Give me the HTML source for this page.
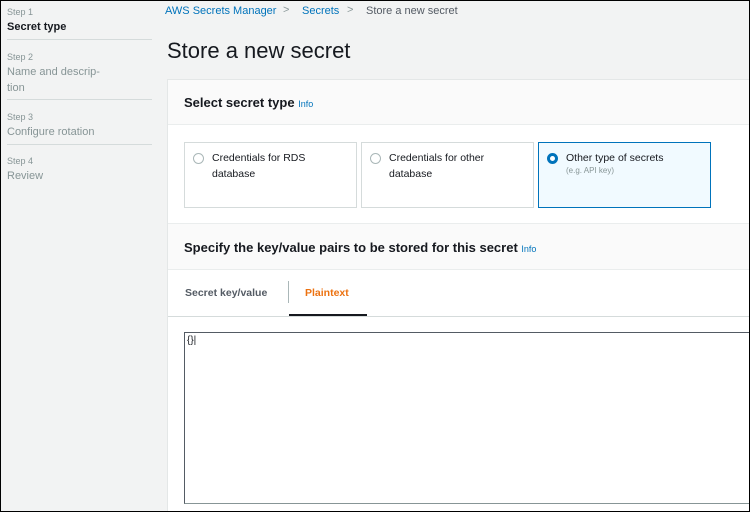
<!DOCTYPE html>
<html><head><style>
*{box-sizing:border-box;margin:0;padding:0}
body{width:750px;height:512px;overflow:hidden;font-family:"Liberation Sans",sans-serif;background:#f2f3f3;position:relative}
.frame{position:absolute;inset:0;border:1px solid #000;z-index:10;pointer-events:none}
.side{position:absolute;left:0;top:0;width:152px;height:512px;background:#f2f3f3}
.step{position:absolute;left:7px;font-size:9px;color:#879596}
.lbl{position:absolute;left:7px;font-size:11px;color:#879596;line-height:16px}
.hr{position:absolute;left:7px;width:145px;height:1px;background:#d5dbdb}
.a{position:absolute;font-size:11px;color:#0073bb}
.panel{position:absolute;left:167px;top:79px;width:583px;height:433px;background:#fff;border:1px solid #e4e7e7;border-right:none}
.h{position:absolute;left:0;width:583px;background:#fafafa;border-bottom:1px solid #eaeded}
.card{position:absolute;top:62px;height:66px;border:1px solid #d5dbdb;background:#fff;font-size:10.5px;color:#16191f;line-height:16px}
.rad{position:absolute;left:8px;top:10px;width:11px;height:11px;border-radius:50%;border:1px solid #aab7b8;background:#fff}
</style></head><body>
<div class="frame"></div>
<div class="side">
<div class="step" style="top:7px">Step 1</div>
<div class="lbl" style="top:19px;color:#16191f;font-weight:bold">Secret type</div>
<div class="hr" style="top:39px"></div>
<div class="step" style="top:52px">Step 2</div>
<div class="lbl" style="top:64px">Name and descrip-<br>tion</div>
<div class="hr" style="top:99px"></div>
<div class="step" style="top:112px">Step 3</div>
<div class="lbl" style="top:124px">Configure rotation</div>
<div class="hr" style="top:144px"></div>
<div class="step" style="top:156px">Step 4</div>
<div class="lbl" style="top:168px">Review</div>
</div>
<div class="a" style="left:165px;top:5px">AWS Secrets Manager</div>
<div class="a" style="left:283px;top:4px;color:#879596">&gt;</div>
<div class="a" style="left:302px;top:5px">Secrets</div>
<div class="a" style="left:347px;top:4px;color:#879596">&gt;</div>
<div class="a" style="left:366px;top:5px;color:#545b64">Store a new secret</div>
<div style="position:absolute;left:167px;top:38px;font-size:22px;color:#16191f">Store a new secret</div>
<div class="panel">
<div class="h" style="top:0;height:45px"><span style="position:absolute;left:16px;top:15px;font-size:13px;font-weight:bold;color:#16191f">Select secret type <span style="font-size:9px;color:#0073bb;font-weight:normal">Info</span></span></div>
<div class="card" style="left:16px;width:173px"><div class="rad"></div><div style="position:absolute;left:27px;top:7px">Credentials for RDS<br>database</div></div>
<div class="card" style="left:193px;width:173px"><div class="rad"></div><div style="position:absolute;left:27px;top:7px">Credentials for other<br>database</div></div>
<div class="card" style="left:370px;width:173px;background:#f1faff;border-color:#0073bb"><div class="rad" style="border:3px solid #0073bb"></div><div style="position:absolute;left:27px;top:7px">Other type of secrets<br><span style="font-size:8px;color:#879596;position:relative;top:-4px">(e.g. API key)</span></div></div>
<div class="h" style="top:143px;height:47px;border-top:1px solid #eaeded"><span style="position:absolute;left:16px;top:16px;font-size:13px;font-weight:bold;color:#16191f">Specify the key/value pairs to be stored for this secret <span style="font-size:9px;color:#0073bb;font-weight:normal">Info</span></span></div>
<div style="position:absolute;left:0;top:236px;width:583px;height:1px;background:#d5dbdb"></div>
<div style="position:absolute;left:17px;top:207px;font-size:10.5px;font-weight:bold;color:#545b64">Secret key/value</div>
<div style="position:absolute;left:120px;top:201px;width:1px;height:22px;background:#aab7b8"></div>
<div style="position:absolute;left:137px;top:207px;font-size:10.5px;font-weight:bold;color:#ec7211">Plaintext</div>
<div style="position:absolute;left:121px;top:234px;width:78px;height:2px;background:#16191f"></div>
<div style="position:absolute;left:16px;top:252px;width:570px;height:172px;border:1px solid #879596;border-top-color:#545b64;border-left-color:#545b64"><span style="position:absolute;left:2px;top:2px;font-size:10px;color:#16191f">{}|</span></div>
</div>
</body></html>
